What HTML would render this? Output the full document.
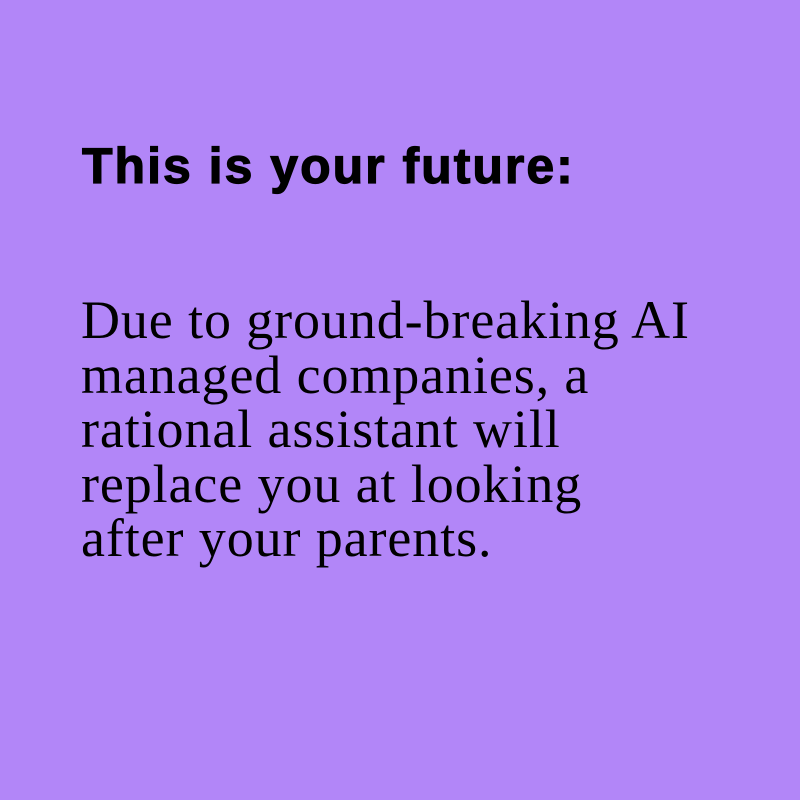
<!DOCTYPE html>
<html><head><style>
html,body{margin:0;padding:0;width:800px;height:800px;background:#b286f8;overflow:hidden}
h1{position:absolute;left:82px;top:138px;margin:0;font-family:"Liberation Sans",sans-serif;font-weight:bold;font-size:50px;line-height:56px;color:#000;letter-spacing:2px;-webkit-text-stroke:1.2px #000;white-space:nowrap}
p{position:absolute;left:81px;top:293px;margin:0;font-family:"Liberation Serif",serif;font-size:54px;line-height:54.5px;color:#000;width:720px;letter-spacing:0.9px;white-space:nowrap}
</style></head><body>
<h1>This is your future:</h1>
<p>Due to ground-breaking AI<br>managed companies, a<br>rational assistant will<br>replace you at looking<br>after your parents.</p>
</body></html>
